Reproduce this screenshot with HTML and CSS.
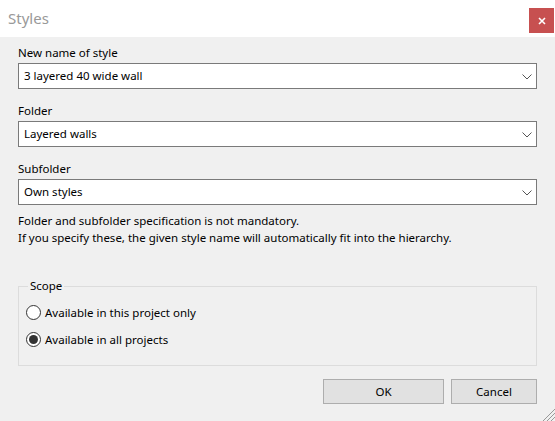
FILE: index.html
```html
<!DOCTYPE html>
<html>
<head>
<meta charset="utf-8">
<link rel="stylesheet" href="styles.css">
</head>
<body>
<div class="window">
  <div class="titlebar">
    <div class="title">Styles</div>
    <div class="close">
      <svg width="8" height="8" viewBox="0 0 8 8"><path d="M1 1 L7 7 M7 1 L1 7" stroke="#fff" stroke-width="1.6" fill="none"/></svg>
    </div>
  </div>
  <div class="content">
    <div class="field first">
      <div class="label">New name of style</div>
      <div class="combo"><span class="value">3 layered 40 wide wall</span><svg class="chev" width="10" height="6" viewBox="0 0 10 6"><path d="M0.5 0.5 L5 5 L9.5 0.5" stroke="#555" stroke-width="1" fill="none"/></svg></div>
    </div>
    <div class="field">
      <div class="label">Folder</div>
      <div class="combo"><span class="value">Layered walls</span><svg class="chev" width="10" height="6" viewBox="0 0 10 6"><path d="M0.5 0.5 L5 5 L9.5 0.5" stroke="#555" stroke-width="1" fill="none"/></svg></div>
    </div>
    <div class="field">
      <div class="label">Subfolder</div>
      <div class="combo"><span class="value">Own styles</span><svg class="chev" width="10" height="6" viewBox="0 0 10 6"><path d="M0.5 0.5 L5 5 L9.5 0.5" stroke="#555" stroke-width="1" fill="none"/></svg></div>
    </div>
    <p class="note">Folder and subfolder specification is not mandatory.<br>If you specify these, the given style name will automatically fit into the hierarchy.</p>
    <fieldset class="group">
      <legend>Scope</legend>
      <div class="radio"><span class="dot"></span><span>Available in this project only</span></div>
      <div class="radio"><span class="dot checked"></span><span>Available in all projects</span></div>
    </fieldset>
    <div class="buttons">
      <div class="btn ok">OK</div>
      <div class="btn cancel">Cancel</div>
    </div>
  </div>
  <svg class="grip" width="15" height="15" viewBox="0 0 15 15"><path d="M15 3 L3 15 M15 7 L7 15 M15 11 L11 15" stroke="#999" stroke-width="1" fill="none"/></svg>
</div>
</body>
</html>
```
FILE: styles.css
```css
html, body {
  margin: 0;
  padding: 0;
}
body {
  background: #f0f0f0;
  font-family: "Noto Sans", "DejaVu Sans", sans-serif;
  font-size: 11.5px;
  color: #000;
  width: 555px;
  height: 421px;
  overflow: hidden;
}
.window {
  position: relative;
  width: 555px;
  height: 421px;
}
.titlebar {
  height: 37px;
  background: #fff;
  display: flex;
  justify-content: space-between;
  align-items: flex-start;
}
.title {
  font-size: 15px;
  line-height: 37px;
  color: #999;
  padding-left: 8px;
}
.close {
  width: 25px;
  height: 25px;
  margin-top: 8px;
  margin-right: 1px;
  background: #c75050;
  display: flex;
  align-items: center;
  justify-content: center;
}
.content {
  padding: 0 18px;
  display: flex;
  flex-direction: column;
}
.field {
  margin-top: 14px;
}
.field.first {
  margin-top: 8px;
}
.label {
  line-height: 16px;
  height: 16px;
  margin-bottom: 2px;
}
.combo {
  box-sizing: border-box;
  height: 26px;
  border: 1px solid #7a7a7a;
  background: #fff;
  display: flex;
  align-items: center;
  justify-content: space-between;
  padding: 0 4px 0 5px;
}
.value {
  line-height: 16px;
}
.chev {
  margin-top: 1px;
}
.note {
  margin: 7px 0 0 0;
  line-height: 17px;
}
.group {
  margin: 32px 0 0 0;
  padding: 8px 0 16px 7px;
  border: 1px solid #dcdcdc;
  min-width: 0;
}
.group legend {
  padding: 0 2px;
  margin-left: 2px;
  line-height: 16px;
}
.radio {
  display: flex;
  align-items: center;
  height: 20px;
  gap: 4px;
}
.radio + .radio {
  margin-top: 7px;
}
.dot {
  box-sizing: border-box;
  width: 15px;
  height: 15px;
  border: 1px solid #333;
  border-radius: 50%;
  background: #fff;
  display: flex;
  align-items: center;
  justify-content: center;
}
.dot.checked::after {
  content: "";
  width: 9px;
  height: 9px;
  border-radius: 50%;
  background: #333;
}
.buttons {
  display: flex;
  justify-content: flex-end;
  gap: 7px;
  margin-top: 13px;
}
.btn {
  box-sizing: border-box;
  height: 25px;
  border: 1px solid #adadad;
  background: #e1e1e1;
  display: flex;
  align-items: center;
  justify-content: center;
}
.ok {
  width: 121px;
}
.cancel {
  width: 86px;
}
.grip {
  position: absolute;
  right: 0;
  bottom: 0;
}
```
